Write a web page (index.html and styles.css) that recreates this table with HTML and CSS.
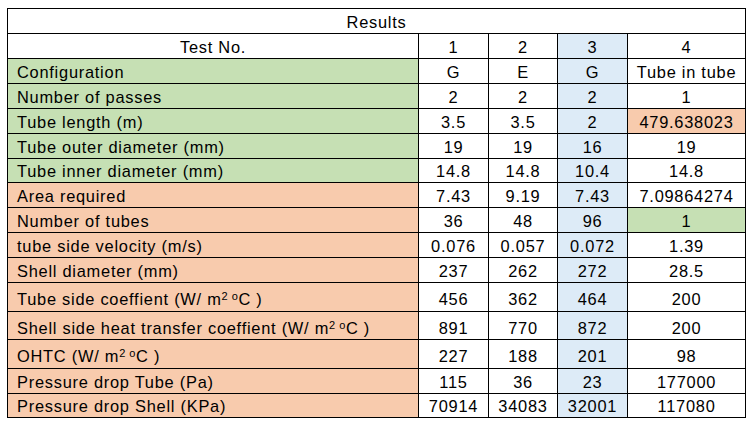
FILE: index.html
```html
<!DOCTYPE html>
<html>
<head>
<meta charset="utf-8">
<link rel="stylesheet" href="styles.css">
</head>
<body>
<table class="results">
  <colgroup>
    <col class="c-label"><col class="c-n"><col class="c-n2"><col class="c-n"><col class="c-4">
  </colgroup>
  <tr class="r-title"><td colspan="5" class="title">Results</td></tr>
  <tr><td class="center">Test No.</td><td>1</td><td>2</td><td class="blue">3</td><td>4</td></tr>
  <tr class="green"><td class="lbl">Configuration</td><td>G</td><td>E</td><td class="blue">G</td><td>Tube in tube</td></tr>
  <tr class="green"><td class="lbl">Number of passes</td><td>2</td><td>2</td><td class="blue">2</td><td>1</td></tr>
  <tr class="green"><td class="lbl">Tube length (m)</td><td>3.5</td><td>3.5</td><td class="blue">2</td><td class="orange">479.638023</td></tr>
  <tr class="green"><td class="lbl">Tube outer diameter (mm)</td><td>19</td><td>19</td><td class="blue">16</td><td>19</td></tr>
  <tr class="green short"><td class="lbl">Tube inner diameter (mm)</td><td>14.8</td><td>14.8</td><td class="blue">10.4</td><td>14.8</td></tr>
  <tr class="orng"><td class="lbl">Area required</td><td>7.43</td><td>9.19</td><td class="blue">7.43</td><td>7.09864274</td></tr>
  <tr class="orng"><td class="lbl">Number of tubes</td><td>36</td><td>48</td><td class="blue">96</td><td class="greencell">1</td></tr>
  <tr class="orng"><td class="lbl">tube side velocity (m/s)</td><td>0.076</td><td>0.057</td><td class="blue">0.072</td><td>1.39</td></tr>
  <tr class="orng"><td class="lbl">Shell diameter (mm)</td><td>237</td><td>262</td><td class="blue">272</td><td>28.5</td></tr>
  <tr class="orng tall"><td class="lbl">Tube side coeffient (W/ m<sup>2 o</sup>C )</td><td>456</td><td>362</td><td class="blue">464</td><td>200</td></tr>
  <tr class="orng tall2"><td class="lbl">Shell side heat transfer coeffient (W/ m<sup>2 o</sup>C )</td><td>891</td><td>770</td><td class="blue">872</td><td>200</td></tr>
  <tr class="orng tall"><td class="lbl">OHTC (W/ m<sup>2 o</sup>C )</td><td>227</td><td>188</td><td class="blue">201</td><td>98</td></tr>
  <tr class="orng"><td class="lbl">Pressure drop Tube (Pa)</td><td>115</td><td>36</td><td class="blue">23</td><td>177000</td></tr>
  <tr class="orng short"><td class="lbl">Pressure drop Shell (KPa)</td><td>70914</td><td>34083</td><td class="blue">32001</td><td>117080</td></tr>
</table>
</body>
</html>
```
FILE: styles.css
```css
html, body {
  margin: 0;
  padding: 0;
  background: #ffffff;
}
body {
  padding: 8px 0 0 7px;
  font-family: "Liberation Sans", Arial, sans-serif;
  font-size: 16.4px;
  letter-spacing: 0.75px;
  color: #000;
}
.results {
  border-collapse: collapse;
  table-layout: fixed;
  width: 739px;
}
.c-label { width: 411px; }
.c-n { width: 70px; }
.c-n2 { width: 69px; }
.c-4 { width: 118px; }
.results tr { height: 25px; }
.results tr.short { height: 24px; }
.results tr.tall { height: 29px; }
.results tr.tall2 { height: 28px; }
.results td {
  border: 1px solid #000;
  padding: 0 0 2px 0;
  line-height: 18px;
  vertical-align: bottom;
  text-align: center;
  white-space: nowrap;
  overflow: hidden;
  background: #ffffff;
}
.results td.lbl {
  text-align: left;
  padding-left: 9px;
}
.results tr.tall td { padding-bottom: 3px; }
.results tr.green td.lbl { background: #c6e0b4; }
.results tr.orng td.lbl { background: #f8cbad; }
.results td.blue { background: #ddebf7; }
.results td.orange { background: #f8cbad; }
.results td.greencell { background: #c6e0b4; }
sup {
  font-size: 11px;
  letter-spacing: 0.5px;
  line-height: 0;
  vertical-align: 5px;
}
```
